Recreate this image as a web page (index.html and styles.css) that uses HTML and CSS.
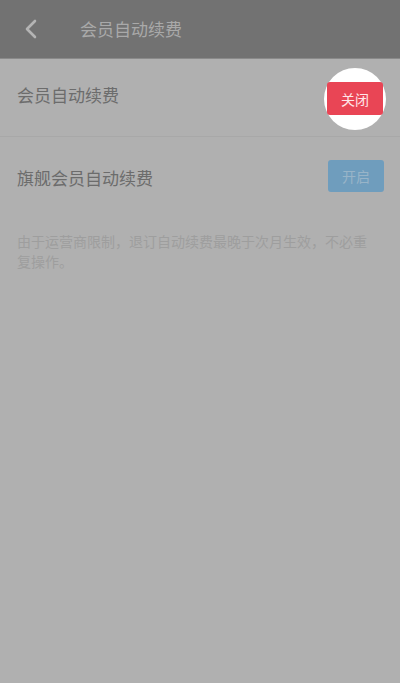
FILE: index.html
```html
<!DOCTYPE html>
<html lang="zh-CN">
<head>
<meta charset="utf-8">
<link rel="stylesheet" href="styles.css">
</head>
<body>
<div class="page">
  <header class="bar">
    <span class="back"><svg width="14" height="20" viewBox="0 0 14 20"><path d="M11 2 L3 10 L11 18" fill="none" stroke="#b4b4b4" stroke-width="2.6" stroke-linecap="round" stroke-linejoin="round"/></svg></span>
    <span class="title">会员自动续费</span>
  </header>
  <div class="row first">
    <span class="label">会员自动续费</span>
    <span class="halo"><span class="btn off">关闭</span></span>
  </div>
  <div class="row second">
    <span class="label">旗舰会员自动续费</span>
    <span class="btn on">开启</span>
  </div>
  <p class="note">由于运营商限制，退订自动续费最晚于次月生效，不必重复操作。</p>
</div>
</body>
</html>
```
FILE: styles.css
```css
html, body { margin: 0; padding: 0; }
body {
  width: 400px; height: 683px; background: #b0b0b0;
  font-family: "Noto Sans CJK SC", "Noto Sans", sans-serif;
  overflow: hidden;
}
.page { width: 400px; }
.bar {
  height: 58px; background: #727272;
  display: flex; align-items: center;
  border-bottom: 1px solid #8a8a8a;
}
.back { width: 80px; display: flex; justify-content: flex-start; padding-left: 24px; box-sizing: border-box; }
.back svg { display: block; }
.title { color: #a9a9a9; font-size: 17px; margin-top: -1px; }
.row {
  display: flex; align-items: center; justify-content: space-between;
  padding: 0 16px 0 17px;
}
.first { height: 77px; border-bottom: 1px solid #a8a8a8; }
.second { height: 78px; }
.label { color: #6c6c6c; font-size: 17px; }
.first .label { margin-top: -6px; }
.second .label { margin-top: 2px; }
.halo {
  width: 62px; height: 62px; border-radius: 50%; background: #fff;
  display: flex; align-items: center; justify-content: center;
  margin-right: -2px; margin-top: 2px;
}
.btn {
  width: 56px; height: 33px; border-radius: 3px;
  display: flex; align-items: center; justify-content: center;
  font-size: 14px;
}
.off { background: #e94555; color: #ffe6e8; }
.on { background: #6f9dbd; color: #98b4c8; height: 32px; }
.note {
  margin: 16px 20px 0 17px; color: #9e9e9e; font-size: 14px; line-height: 20px;
}
```
